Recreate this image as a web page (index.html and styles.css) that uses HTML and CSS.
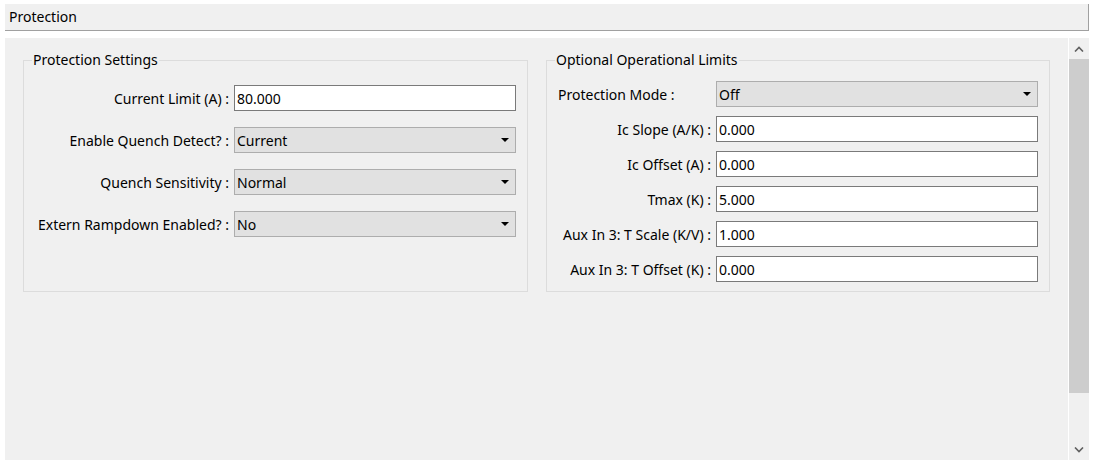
FILE: index.html
```html
<!DOCTYPE html>
<html>
<head>
<meta charset="utf-8">
<link rel="stylesheet" href="styles.css">
</head>
<body>
<div class="header">Protection</div>
<div class="main">
  <div class="content">
    <fieldset class="group group-left">
      <legend>Protection Settings</legend>
      <div class="form form-left">
        <label>Current Limit (A) :</label>
        <div class="input">80.000</div>
        <label>Enable Quench Detect? :</label>
        <div class="select">Current<span class="arrow"></span></div>
        <label>Quench Sensitivity :</label>
        <div class="select">Normal<span class="arrow"></span></div>
        <label>Extern Rampdown Enabled? :</label>
        <div class="select">No<span class="arrow"></span></div>
      </div>
    </fieldset>
    <fieldset class="group group-right">
      <legend>Optional Operational Limits</legend>
      <div class="form form-right">
        <label class="left">Protection Mode :</label>
        <div class="select">Off<span class="arrow"></span></div>
        <label>Ic Slope (A/K) :</label>
        <div class="input">0.000</div>
        <label>Ic Offset (A) :</label>
        <div class="input">0.000</div>
        <label>Tmax (K) :</label>
        <div class="input">5.000</div>
        <label>Aux In 3: T Scale (K/V) :</label>
        <div class="input">1.000</div>
        <label>Aux In 3: T Offset (K) :</label>
        <div class="input">0.000</div>
      </div>
    </fieldset>
  </div>
  <div class="scrollbar">
    <div class="sb-btn">
      <svg width="10" height="6" viewBox="0 0 10 6"><path d="M1 5.5 L5 1.5 L9 5.5" fill="none" stroke="#606060" stroke-width="1.6"/></svg>
    </div>
    <div class="sb-thumb"></div>
    <div class="sb-rest"></div>
    <div class="sb-btn">
      <svg width="10" height="6" viewBox="0 0 10 6"><path d="M1 0.5 L5 4.5 L9 0.5" fill="none" stroke="#606060" stroke-width="1.6"/></svg>
    </div>
  </div>
</div>
</body>
</html>
```

FILE: styles.css
```css
html, body {
  margin: 0;
  padding: 0;
  background: #ffffff;
}
body {
  font-family: "Noto Sans", "Open Sans", sans-serif;
  font-size: 14px;
  color: #000000;
  width: 1093px;
  height: 464px;
  overflow: hidden;
}
.header {
  margin: 4px 0 0 5px;
  width: 1084px;
  height: 27px;
  box-sizing: border-box;
  background: #f0f0f0;
  border-right: 1px solid #a0a0a0;
  border-bottom: 1px solid #a0a0a0;
  padding-left: 4px;
  line-height: 26px;
}
.main {
  display: flex;
  margin: 7px 0 0 5px;
  height: 422px;
  gap: 1px;
}
.content {
  width: 1063px;
  background: #f0f0f0;
  display: flex;
  align-items: flex-start;
  gap: 18px;
  padding: 12px 18px 0 18px;
  box-sizing: border-box;
}
.group {
  margin: 0;
  border: 1px solid #dcdcdc;
  padding: 0;
  box-sizing: border-box;
  min-width: 0;
  height: 242px;
}
.group legend {
  margin-left: 8px;
  padding: 0 1px;
  line-height: 20px;
}
.group-left { width: 505px; }
.group-right { width: 504px; }
.form {
  display: grid;
  align-items: center;
}
.form-left {
  grid-template-columns: 1fr 282px;
  column-gap: 5px;
  row-gap: 16px;
  padding: 15px 11px 0 6px;
}
.form-right {
  grid-template-columns: 1fr 322px;
  column-gap: 5px;
  row-gap: 9px;
  padding: 11px 11px 0 11px;
}
.form label {
  text-align: right;
  white-space: nowrap;
}
.form label.left {
  text-align: left;
}
.input, .select {
  height: 26px;
  box-sizing: border-box;
  line-height: 25px;
  padding-left: 2px;
  position: relative;
}
.input {
  background: #ffffff;
  border: 1px solid #7a7a7a;
}
.select {
  background: #e1e1e1;
  border: 1px solid #adadad;
}
.arrow {
  position: absolute;
  right: 6px;
  top: 10px;
  width: 0;
  height: 0;
  border-left: 4px solid transparent;
  border-right: 4px solid transparent;
  border-top: 4px solid #000000;
}
.scrollbar {
  width: 20px;
  display: flex;
  flex-direction: column;
  background: #f0f0f0;
}
.sb-btn {
  height: 21px;
  display: flex;
  align-items: center;
  justify-content: center;
}
.sb-thumb {
  height: 334px;
  background: #cdcdcd;
}
.sb-rest {
  flex: 1;
}
```
